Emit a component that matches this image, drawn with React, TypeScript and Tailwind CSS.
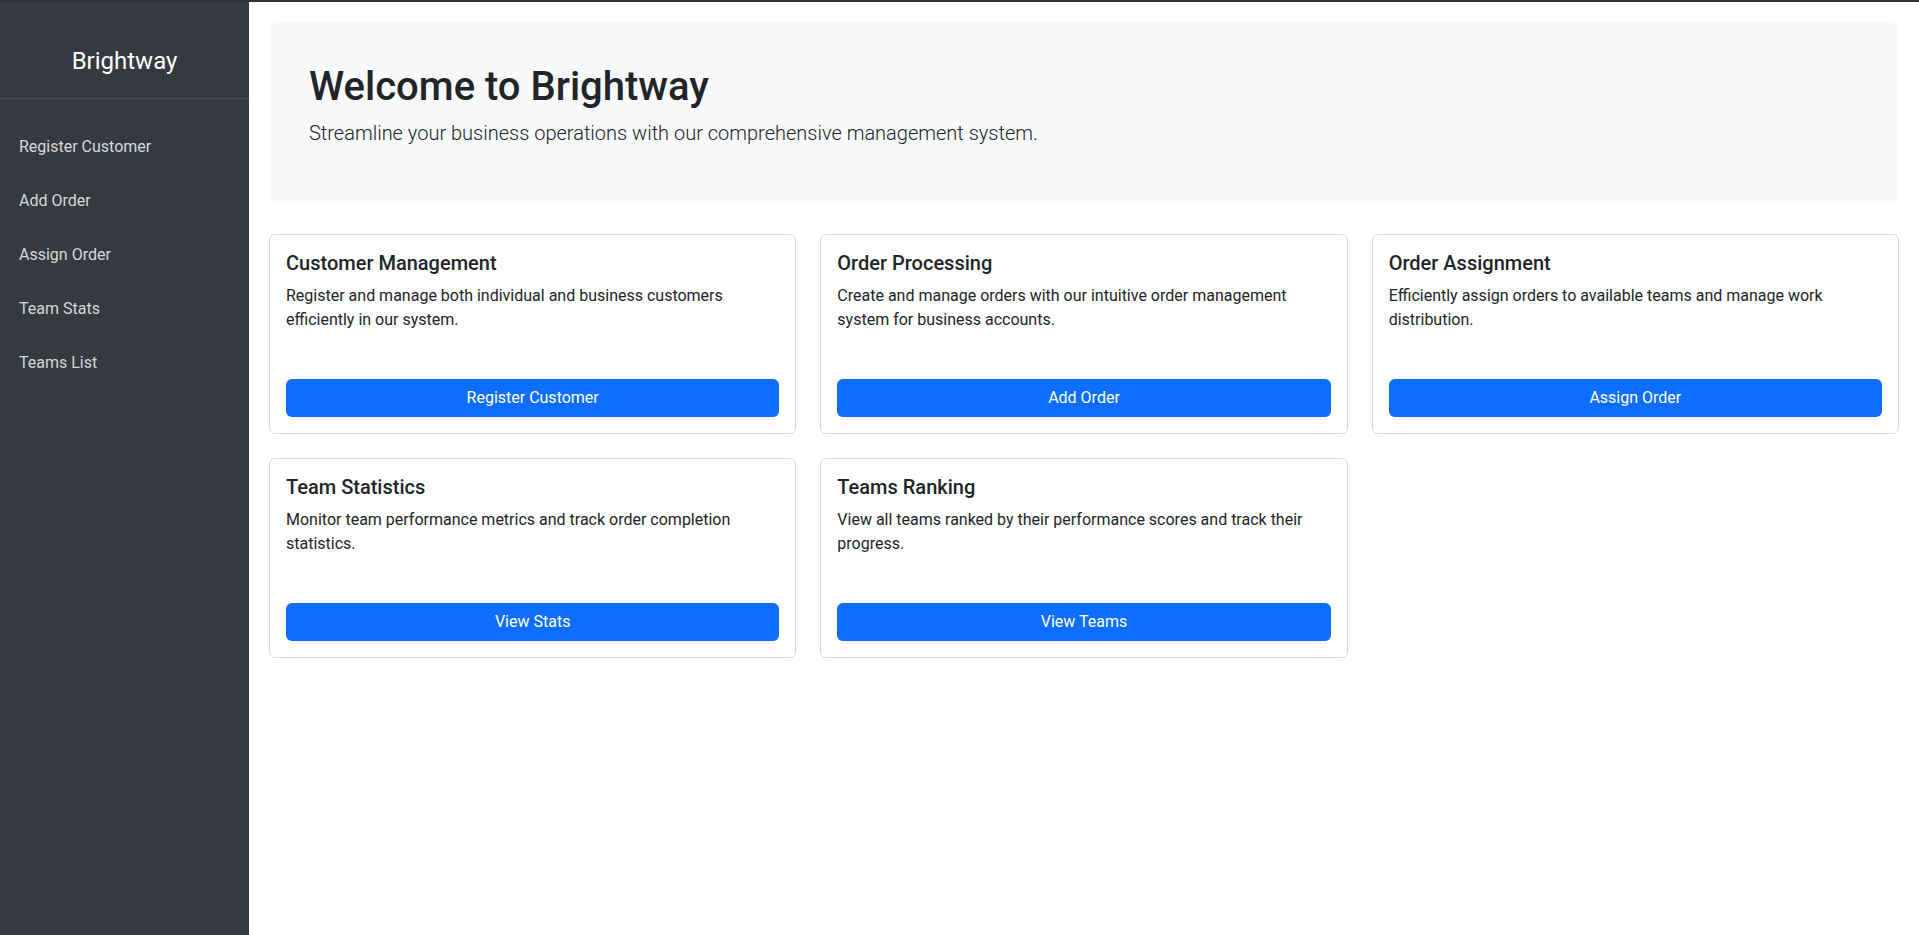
import React from "react";

const cards = [
  {
    title: "Customer Management",
    text: "Register and manage both individual and business customers efficiently in our system.",
    button: "Register Customer",
  },
  {
    title: "Order Processing",
    text: "Create and manage orders with our intuitive order management system for business accounts.",
    button: "Add Order",
  },
  {
    title: "Order Assignment",
    text: "Efficiently assign orders to available teams and manage work distribution.",
    button: "Assign Order",
  },
  {
    title: "Team Statistics",
    text: "Monitor team performance metrics and track order completion statistics.",
    button: "View Stats",
  },
  {
    title: "Teams Ranking",
    text: "View all teams ranked by their performance scores and track their progress.",
    button: "View Teams",
  },
];

const navItems = ["Register Customer", "Add Order", "Assign Order", "Team Stats", "Teams List"];

export default function App() {
  return (
    <div
      className="flex flex-col min-h-screen bg-white text-[#212529]"
      style={{ fontFamily: "Roboto, 'Liberation Sans', sans-serif" }}
    >
      <div className="h-[2px] w-full bg-[#2f3037]" />
      <div className="flex flex-1">
        <aside className="w-[249px] shrink-0 bg-[#343a40] flex flex-col min-h-[933px]">
          <div className="pt-[45px] pb-[22px] border-b border-[#4a5056] text-center">
            <div className="text-[24px] leading-[29px] text-white">Brightway</div>
          </div>
          <nav className="pt-[21px] flex flex-col">
            {navItems.map((n) => (
              <a
                key={n}
                href="#"
                className="block px-[19px] py-[15px] text-[16px] leading-6 text-[#d5d8db]"
              >
                {n}
              </a>
            ))}
          </nav>
        </aside>
        <main className="flex-1 p-[20px]">
          <div className="bg-[#f8f9fa] rounded-[10px] pt-[41px] pb-[40px] px-10 mb-[30px]">
            <h1 className="text-[40px] leading-[48px] font-medium mb-[7px] text-[#212529]">
              Welcome to Brightway
            </h1>
            <p className="text-[20px] leading-[30px] font-light mb-4 text-[#212529]">
              Streamline your business operations with our comprehensive management system.
            </p>
          </div>
          <div className="grid grid-cols-3 gap-6">
            {cards.map((c) => (
              <div
                key={c.title}
                className="border border-[#dadada] rounded-[6px] bg-white p-4 flex flex-col"
              >
                <h5 className="text-[20px] leading-6 font-medium mb-[9px] text-[#212529]">{c.title}</h5>
                <p className="text-[16px] leading-6 mb-[47px] text-[#212529]">{c.text}</p>
                <button className="w-full h-[38px] bg-[#0d6efd] rounded-[6px] text-white text-[16px] leading-6">
                  {c.button}
                </button>
              </div>
            ))}
          </div>
        </main>
      </div>
    </div>
  );
}
